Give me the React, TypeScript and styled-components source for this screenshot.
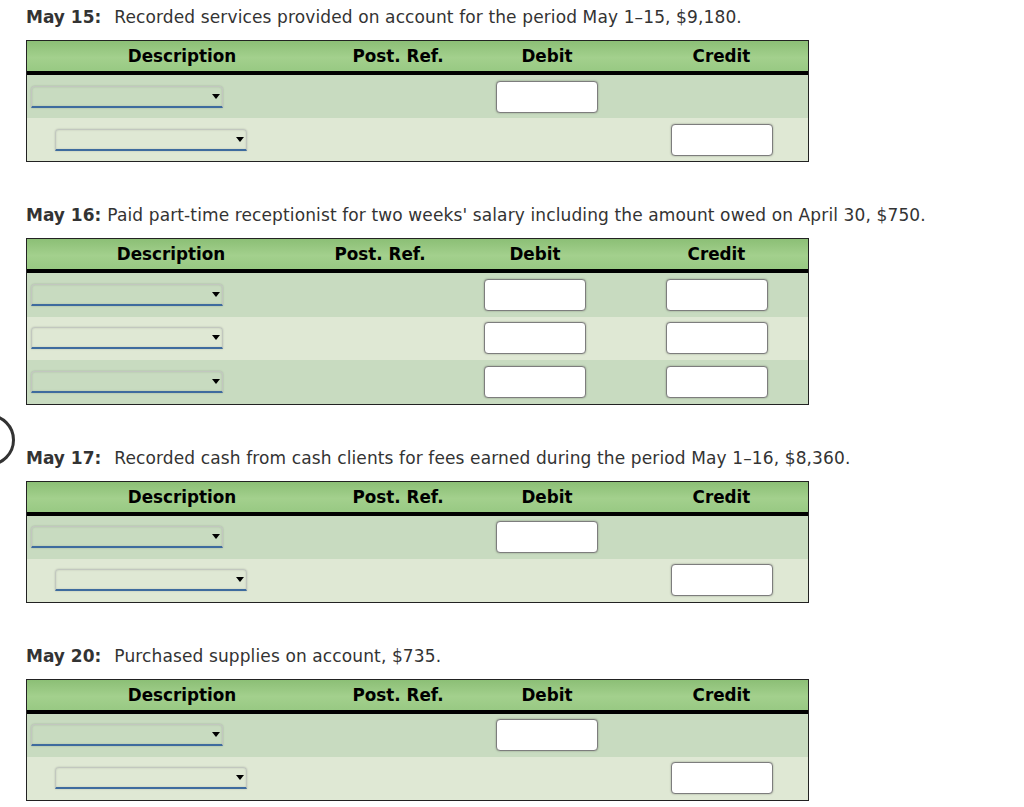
import styled, { createGlobalStyle } from "styled-components";

const GlobalStyle = createGlobalStyle`
    body {
        margin: 0;
        background: #ffffff;
        font-family: "DejaVu Sans", Verdana, sans-serif;
    }
`;

const Page = styled.main`
    position: relative;
    padding: 7px 0 0 26px;
    display: flex;
    flex-direction: column;
    gap: 43px;
    overflow: hidden;
    height: 807px;
    box-sizing: border-box;
`;

const Section = styled.section`
    display: flex;
    flex-direction: column;
    gap: 13px;
`;

const Title = styled.p<{ $tight?: boolean }>`
    margin: 0;
    height: 20px;
    font-size: 17px;
    line-height: 20px;
    letter-spacing: 0.12px;
    color: #333333;
    white-space: nowrap;

    strong {
        font-weight: bold;
        letter-spacing: 0;
        margin-right: ${(p) => (p.$tight ? "6px" : "13px")};
    }
`;

const Table = styled.div<{ $cols: string }>`
    width: 783px;
    box-sizing: border-box;
    border: 1px solid #222222;
    display: grid;
    grid-template-columns: ${(p) => p.$cols};
`;

const HeadCell = styled.div`
    height: 30px;
    display: flex;
    align-items: center;
    justify-content: center;
    font-weight: bold;
    font-size: 16.8px;
    color: #000000;
    background: linear-gradient(#8cbf76, #a3d08d 55%, #98c983);
    border-bottom: 4px solid #000000;
`;

const Cell = styled.div<{ $alt: boolean; $h: number; $indent?: boolean }>`
    height: ${(p) => p.$h}px;
    display: flex;
    align-items: center;
    justify-content: ${(p) => (p.$indent === undefined ? "center" : "flex-start")};
    padding-left: ${(p) => (p.$indent ? "28px" : p.$indent === false ? "4px" : "0")};
    background: ${(p) => (p.$alt ? "#dfe8d4" : "#c8dbc0")};
`;

const Select = styled.div`
    position: relative;
    width: 192px;
    height: 22px;
    box-sizing: border-box;
    border: 1px solid #c2c7bf;
    border-radius: 4px;
    box-shadow: inset 0 0 2px rgba(0, 0, 0, 0.15), 0 0 2px rgba(0, 0, 0, 0.2);
    border-bottom: 2px solid #3e6b9e;
    border-bottom-left-radius: 0;
    border-bottom-right-radius: 0;

    &::after {
        content: "";
        position: absolute;
        right: 2px;
        top: 7px;
        border-left: 4.5px solid transparent;
        border-right: 4.5px solid transparent;
        border-top: 5px solid #000000;
    }
`;

const Amount = styled.div`
    width: 102px;
    height: 32px;
    box-sizing: border-box;
    background: #ffffff;
    border: 1px solid #7d7d7d;
    border-radius: 4px;
    box-shadow: 0 0 2px rgba(0, 0, 0, 0.35);
`;

const Ring = styled.div`
    position: absolute;
    left: -37px;
    top: 414px;
    width: 46px;
    height: 46px;
    border: 3px solid #333333;
    border-radius: 50%;
`;

type Line = { indent: boolean; debit: boolean; credit: boolean };

type Entry = {
    date: string;
    text: string;
    cols: string;
    rowHeight: number;
    tight?: boolean;
    lines: Line[];
};

const twoLine: Line[] = [
    { indent: false, debit: true, credit: false },
    { indent: true, debit: false, credit: true },
];

const entries: Entry[] = [
    {
        date: "May 15:",
        text: "Recorded services provided on account for the period May 1–15, $9,180.",
        cols: "310px 122px 176px 173px",
        rowHeight: 43,
        lines: twoLine,
    },
    {
        date: "May 16:",
        text: "Paid part-time receptionist for two weeks' salary including the amount owed on April 30, $750.",
        cols: "288px 130px 180px 183px",
        rowHeight: 43.67,
        tight: true,
        lines: [
            { indent: false, debit: true, credit: true },
            { indent: false, debit: true, credit: true },
            { indent: false, debit: true, credit: true },
        ],
    },
    {
        date: "May 17:",
        text: "Recorded cash from cash clients for fees earned during the period May 1–16, $8,360.",
        cols: "310px 122px 176px 173px",
        rowHeight: 43,
        lines: twoLine,
    },
    {
        date: "May 20:",
        text: "Purchased supplies on account, $735.",
        cols: "310px 122px 176px 173px",
        rowHeight: 43,
        lines: twoLine,
    },
];

const JournalTable = ({ entry }: { entry: Entry }) => (
    <Table $cols={entry.cols}>
        <HeadCell>Description</HeadCell>
        <HeadCell>Post. Ref.</HeadCell>
        <HeadCell>Debit</HeadCell>
        <HeadCell>Credit</HeadCell>
        {entry.lines.map((line, i) => {
            const alt = i % 2 === 1;
            const h = entry.rowHeight;
            return [
                <Cell key={`d${i}`} $alt={alt} $h={h} $indent={line.indent}>
                    <Select />
                </Cell>,
                <Cell key={`p${i}`} $alt={alt} $h={h} />,
                <Cell key={`b${i}`} $alt={alt} $h={h}>{line.debit && <Amount />}</Cell>,
                <Cell key={`c${i}`} $alt={alt} $h={h}>{line.credit && <Amount />}</Cell>,
            ];
        })}
    </Table>
);

export default function App() {
    return (
        <>
            <GlobalStyle />
            <Page>
                <Ring />
                {entries.map((entry) => (
                    <Section key={entry.date}>
                        <Title $tight={entry.tight}>
                            <strong>{entry.date}</strong>
                            {entry.text}
                        </Title>
                        <JournalTable entry={entry} />
                    </Section>
                ))}
            </Page>
        </>
    );
}
